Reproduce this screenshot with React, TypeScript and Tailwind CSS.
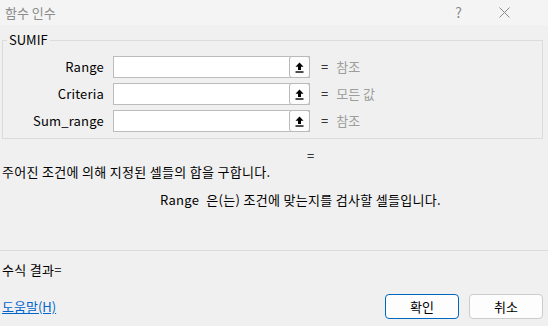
import React from 'react';

const rows = [
  { label: 'Range', hint: '참조' },
  { label: 'Criteria', hint: '모든 값' },
  { label: 'Sum_range', hint: '참조' },
];

function PickIcon() {
  return (
    <svg width="9" height="11" viewBox="0 0 9 11" fill="black">
      <path d="M4.5 0.5 L8.5 4.8 H6 V8 H3 V4.8 H0.5 Z" />
      <rect x="0.5" y="9.3" width="8" height="1.4" />
    </svg>
  );
}

function ArgRow({ label, hint }: { label: string; hint: string }) {
  return (
    <div className="flex items-center h-[22px]">
      <div className="w-[101px] text-right leading-[16px] tracking-[0.2px]">{label}</div>
      <div className="ml-[9px] w-[197px] h-[22px] flex bg-white border border-[#bcbcbc]">
        <div className="flex-1" />
        <button className="w-[21px] -my-px -mr-px flex items-center justify-center border border-[#b9b9b9] rounded-[3px] bg-[#fdfdfd]">
          <PickIcon />
        </button>
      </div>
      <span className="ml-[11px] leading-[16px]">=</span>
      <span className="ml-[8px] leading-[16px] text-[#9d9d9d]">{hint}</span>
    </div>
  );
}

export default function App() {
  return (
    <div className="w-[548px] h-[326px] bg-[#f0f0f0] text-[13px] text-black flex flex-col overflow-hidden font-['Noto_Sans_CJK_KR',sans-serif]">
      {/* title bar */}
      <div className="h-[25px] bg-[#f4f4f4] flex items-center pl-[5px]">
        <span className="text-[13px] text-[#8c8c8c]">함수 인수</span>
        <span className="ml-auto text-[14px] text-[#8c8c8c] mr-[37px]">?</span>
        <svg width="11" height="11" viewBox="0 0 11 11" className="mr-[38px]" stroke="#8a8a8a" strokeWidth="1">
          <path d="M0.5 0.5 L10.5 10.5 M10.5 0.5 L0.5 10.5" />
        </svg>
      </div>

      {/* group box */}
      <div className="pt-[15px] pl-[2px]">
        <div className="relative w-[541px] h-[99px] border border-[#dcdcdc] pt-[15px] flex flex-col gap-[5px]">
          <span className="absolute left-[4px] top-[-9px] px-[2px] bg-[#f0f0f0] leading-[16px]">SUMIF</span>
          {rows.map((r) => (
            <ArgRow key={r.label} label={r.label} hint={r.hint} />
          ))}
        </div>
      </div>

      <div className="mt-[9px] h-[16px] leading-[16px] pl-[307px]">=</div>
      <div className="h-[16px] leading-[16px] pl-[2px] tracking-[0.3px]">주어진 조건에 의해 지정된 셀들의 합을 구합니다.</div>
      <div className="mt-[12px] h-[16px] leading-[16px] pl-[160px] flex tracking-[0.3px]">
        <span>Range</span>
        <span className="ml-[7px]">은(는) 조건에 맞는지를 검사할 셀들입니다.</span>
      </div>

      <div className="mt-[42px] h-px bg-[#dadada]" />

      <div className="mt-[11px] h-[16px] leading-[16px] pl-[2px] tracking-[0.3px]">수식 결과=</div>

      <div className="mt-[16px] h-[25px] flex items-center pl-[2px] pr-[5px] gap-[10px]">
        <a href="#" className="text-[#0066cc] underline mr-auto leading-[16px]">도움말(H)</a>
        <button className="w-[74px] h-[25px] border border-[#0067c0] rounded-[4px] bg-[#fdfdfd]">확인</button>
        <button className="w-[74px] h-[25px] border border-[#cccccc] rounded-[4px] bg-[#fdfdfd]">취소</button>
      </div>
    </div>
  );
}
